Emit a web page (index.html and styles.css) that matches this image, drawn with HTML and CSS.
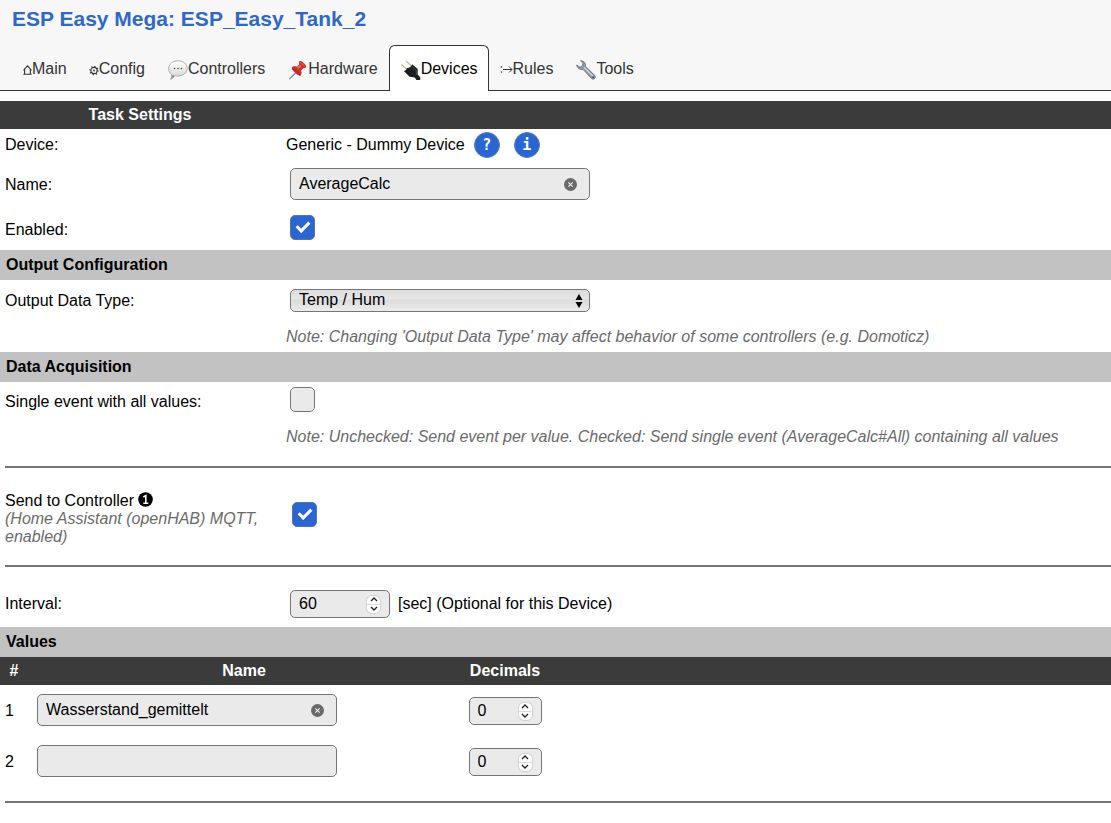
FILE: index.html
```html
<!DOCTYPE html>
<html lang="en">
<head>
<meta charset="utf-8">
<meta name="viewport" content="width=device-width, initial-scale=1">
<title>ESP_Easy_Tank_2</title>
<link rel="stylesheet" href="styles.css">
</head>
<body>
<header class="header">
  <h1 class="title">ESP Easy Mega: ESP_Easy_Tank_2</h1>
  <nav class="tabs">
    <a class="tab" href="#main"><svg viewBox="0 0 9 16" width="9" height="16"><path d="M.5 9.300 4.500 4.800l4 4.500M1.600 8.500v4.800M7.400 8.500v4.800M.3 13.300h8.400" fill="none" stroke="#333" stroke-width="1.100"/></svg>Main</a>
    <a class="tab" href="#config"><svg viewBox="0 0 10 16" width="10" height="16"><g fill="none" stroke="#333"><circle cx="5" cy="9.500" r="3.100" stroke-width="1.100"/><circle cx="5" cy="9.500" r="4.100" stroke-width="1.200" stroke-dasharray="1.200 2"/></g><circle cx="5" cy="9.500" r=".9" fill="#333"/></svg>Config</a>
    <a class="tab" href="#controllers"><svg class="icon" viewBox="0 0 20 20" width="20" height="20"><defs><linearGradient id="bubble" x2="0" y2="1"><stop stop-color="#fff"/><stop offset="1" stop-color="#d2d2d2"/></linearGradient></defs><path d="M10 .8c5.300 0 9.200 3.300 9.200 7.600s-4 7.600-9.200 7.600c-1.200 0-2.200-.1-3.200-.4-.8 1.600-2 2.900-4.200 3.600.9-1.300 1.200-2.800.9-4.500C1.700 13.200.7 11 .7 8.400.7 4.100 4.700.8 10 .8Z" fill="url(#bubble)" stroke="#a5a5a5" stroke-width=".9"/><path d="M3.600 14.800c.3 1.700 0 3.100-1 4.400 2.200-.7 3.400-2 4.200-3.600Z" fill="#999"/><g fill="#444"><circle cx="6.500" cy="8.500" r=".8"/><circle cx="10" cy="8.500" r=".8"/><circle cx="13.500" cy="8.500" r=".8"/></g></svg>Controllers</a>
    <a class="tab" href="#hardware"><svg class="icon" viewBox="0 0 20 20" width="20" height="20"><path d="m9 11.500-7.300 7.300" stroke="#7e93a8" stroke-width="1.300" stroke-linecap="round"/><path d="M11.700.9c1.800-.6 7 4.200 6.600 6.200-.2 1-1.700 1-2.700.8L13.100 10.500c1 2.200.4 4.600-.9 5.200C10.200 16 3.800 10.300 3.800 7.900c.1-1.500 2.800-1.900 4.800-1.200L11.300 4.200c-.4-1.300-.3-2.800.4-3.300Z" fill="#cf3027"/><path d="M12 1.500c1.700.1 5.300 3.700 5.600 5.600-1.800.3-5.800-3.600-5.600-5.600Z" fill="#dc4a3d"/><path d="m8.900 7 3.200-2.100 1.300 1.400-3.200 3Z" fill="#ec7062"/><path d="M4.400 8.800c2.500.6 6 3.800 7.600 6.500" fill="none" stroke="#9e2520" stroke-width="1"/></svg>Hardware</a>
    <a class="tab tab-active" href="#devices" aria-current="page"><svg class="icon" viewBox="0 0 20 20" width="20" height="20"><path d="m.5 4.500 6 5.300M5 .8l6 5.600" stroke="#bdb48b" stroke-width="1.100"/><path d="m11.200 4.200 5.500 4.900v5.400l2.500 2.700v2.700h-3.800L13.800 17.500l-5.300-.7-5.700-5.800c2.300-.5 2.800-1.600 3.200-2.900 2.900-.1 4.300-1.500 5.200-3.900Z" fill="#1c1e1e"/><path d="m11 6.500 4.200 4 .3 4.300" fill="none" stroke="#484d4a" stroke-width="1"/></svg>Devices</a>
    <a class="tab" href="#rules"><svg viewBox="0 0 13 16" width="13" height="16"><g fill="#333"><circle cx="1.500" cy="6" r=".8"/><circle cx="1.500" cy="11" r=".8"/></g><path d="M3 8.500h9M9 5.500l3 3-3 3" fill="none" stroke="#333" stroke-width="1"/></svg>Rules</a>
    <a class="tab" href="#tools"><svg class="icon" viewBox="0 0 20 20" width="20" height="20"><path d="M4.500.7c2.600-.2 4.700 1.500 5 4l.1 1.700 9.300 9.200c1.500 1.700-1.100 4.700-3.100 3.200L7.100 9.500c-3.300.5-6.100-1.500-6.400-4.600L4 7.300l2.700-1.900.2-2.300Z" fill="#929ba1" stroke="#657078" stroke-width=".8"/><path d="m8.300 7.500 8.500 8.700" stroke="#d8dde0" stroke-width="1.100"/><circle cx="17.200" cy="17.300" r=".9" fill="#38454d"/></svg>Tools</a>
  </nav>
</header>

<form class="form">
  <h2 class="bar bar-dark"><span class="bar-title">Task Settings</span></h2>
  <div class="row row-device">
    <span>Device:</span>
    <div class="value">Generic - Dummy Device
      <button type="button" class="round" aria-label="Help">?</button>
      <button type="button" class="round" aria-label="Information">i</button>
    </div>
  </div>
  <div class="row row-name">
    <label for="name">Name:</label>
    <div class="value control"><span class="field"><input class="input text" id="name" type="text" value="AverageCalc"><button type="button" class="clear" aria-label="Clear name"><svg viewBox="0 0 13 13" width="13" height="13"><circle cx="6.500" cy="6.500" r="6.500" fill="#696969"/><path d="m4.300 4.300 4.400 4.400m0-4.400L4.300 8.700" stroke="#eee" stroke-width="1.100"/></svg></button></span></div>
  </div>
  <div class="row row-enabled">
    <label for="enabled">Enabled:</label>
    <div class="value control"><input class="check" id="enabled" type="checkbox" checked></div>
  </div>

  <h2 class="bar">Output Configuration</h2>
  <div class="row row-type">
    <label for="type">Output Data Type:</label>
    <div class="value control"><span class="field"><select class="input select" id="type"><option>Temp / Hum</option></select><svg class="arrows" viewBox="0 0 8 14" width="8" height="14"><path d="m4 0 3.500 6h-7ZM.5 8h7L4 14Z"/></svg></span></div>
  </div>
  <div class="row row-note"><p class="value note">Note: Changing 'Output Data Type' may affect behavior of some controllers (e.g. Domoticz)</p></div>

  <h2 class="bar">Data Acquisition</h2>
  <div class="row row-single">
    <label for="single">Single event with all values:</label>
    <div class="value control"><input class="check" id="single" type="checkbox"></div>
  </div>
  <div class="row row-note"><p class="value note">Note: Unchecked: Send event per value. Checked: Send single event (AverageCalc#All) containing all values</p></div>

  <hr class="line">
  <div class="row row-send">
    <label for="send">Send to Controller <svg class="badge" viewBox="0 0 15 15" width="15" height="15"><circle cx="7.500" cy="7.500" r="7.300"/><path d="M5.300 5 7.800 3.600V11M5.300 11.300h5" fill="none" stroke="#fff" stroke-width="1.600"/></svg><br><span class="note">(Home Assistant (openHAB) MQTT, enabled)</span></label>
    <div class="value control control-send"><input class="check" id="send" type="checkbox" checked></div>
  </div>
  <hr class="line">

  <div class="row row-interval">
    <label for="interval">Interval:</label>
    <div class="value control"><span class="field"><input class="input number wide" id="interval" type="number" value="60"><span class="stepper"><button type="button" aria-label="Increase interval"><svg viewBox="0 0 8 5" width="8" height="5"><path d="m1 4 3-3 3 3"/></svg></button><button type="button" aria-label="Decrease interval"><svg viewBox="0 0 8 5" width="8" height="5"><path d="m1 1 3 3 3-3"/></svg></button></span></span><span class="unit">[sec] (Optional for this Device)</span></div>
  </div>

  <h2 class="bar">Values</h2>
  <table class="values">
    <thead>
      <tr><th class="col-index">#</th><th class="col-name">Name</th><th class="col-decimals">Decimals</th><th></th></tr>
    </thead>
    <tbody>
      <tr>
        <td>1</td>
        <td class="cell-name"><span class="field"><input class="input text" type="text" aria-label="Value 1 name" value="Wasserstand_gemittelt"><button type="button" class="clear" aria-label="Clear value 1 name"><svg viewBox="0 0 13 13" width="13" height="13"><circle cx="6.500" cy="6.500" r="6.500" fill="#696969"/><path d="m4.300 4.300 4.400 4.400m0-4.400L4.300 8.700" stroke="#eee" stroke-width="1.100"/></svg></button></span></td>
        <td class="cell-decimals"><span class="field"><input class="input number" type="number" aria-label="Value 1 decimals" value="0"><span class="stepper"><button type="button" aria-label="Increase decimals 1"><svg viewBox="0 0 8 5" width="8" height="5"><path d="m1 4 3-3 3 3"/></svg></button><button type="button" aria-label="Decrease decimals 1"><svg viewBox="0 0 8 5" width="8" height="5"><path d="m1 1 3 3 3-3"/></svg></button></span></span></td>
        <td></td>
      </tr>
      <tr>
        <td>2</td>
        <td class="cell-name"><span class="field"><input class="input text" type="text" aria-label="Value 2 name"></span></td>
        <td class="cell-decimals"><span class="field"><input class="input number" type="number" aria-label="Value 2 decimals" value="0"><span class="stepper"><button type="button" aria-label="Increase decimals 2"><svg viewBox="0 0 8 5" width="8" height="5"><path d="m1 4 3-3 3 3"/></svg></button><button type="button" aria-label="Decrease decimals 2"><svg viewBox="0 0 8 5" width="8" height="5"><path d="m1 1 3 3 3-3"/></svg></button></span></span></td>
        <td></td>
      </tr>
    </tbody>
  </table>
  <hr class="line">
</form>
</body>
</html>
```
FILE: styles.css
```css
*, ::before, ::after { box-sizing: border-box; }

body {
  margin: 0;
  background: #fff;
  color: #000;
  font: 16px/18px "Liberation Sans", Arial, sans-serif;
}

/* Header and tabs */
.header {
  padding: 6px 12px 0;
  background: #f7f7f7;
  box-shadow: inset 0 -1px #333;
}
.title {
  margin: 0 0 13px;
  color: #2f68c5;
  font-size: 21px;
  line-height: 26px;
}
.tabs { display: flex; }
.tab {
  display: flex;
  align-items: center;
  height: 46px;
  padding: 0 10px;
  border: 1px solid transparent;
  border-bottom: 0;
  border-radius: 6px 6px 0 0;
  color: #333;
  text-decoration: none;
}
.icon { margin: 2px 0 0 1px; }
.tab-active {
  border-color: #333;
  background: #fff;
  color: #000;
}

/* Section bars */
.form { padding-top: 10px; }
.bar {
  margin: 0;
  padding: 0 6px;
  background: #c2c2c2;
  font-size: 16px;
  line-height: 30px;
}
.bar-dark {
  padding: 0;
  background: #3b3b3b;
  color: #fff;
  line-height: 28px;
}
.bar-title {
  display: block;
  width: 280px;
  text-align: center;
}

/* Rows: label column, then the setting */
.row {
  display: grid;
  grid-template-columns: 260px 1fr;
  column-gap: 21px;
  align-items: center;
  padding-left: 5px;
}
.value {
  display: flex;
  align-items: center;
  grid-column: 2;
  margin: 0;
}
.control { padding-left: 4px; }
.control-send { padding-left: 6px; }
.row-device { height: 31px; }
.row-name { height: 48px; }
.row-name label { padding-top: 2px; }
.row-enabled { height: 42px; padding-top: 1px; }
.row-enabled .check, .row-single .check { margin-bottom: 4px; }
.row-type { height: 41px; }
.row-note { height: 31px; }
.row-single { height: 39px; }
.row-send { height: 97px; padding-top: 4px; }
.row-send .check { margin-bottom: 8px; }
.row-interval { height: 60px; padding-top: 13px; }
.note { color: #6a6a6a; font-style: italic; }
.badge { vertical-align: -1px; }
.unit { margin-left: 8px; }

.line {
  height: 2px;
  margin: 14px 0 0 5px;
  border: 0;
  background: #757575;
}
.row-send + .line { margin-top: 0; }

/* Controls */
.round {
  width: 26px;
  height: 26px;
  margin-left: 9px;
  padding: 0;
  border: 1px solid #5e7fb8;
  border-radius: 50%;
  background: #2965d3;
  color: #fff;
  font: bold 15px/24px "DejaVu Sans Mono", monospace;
}
.round + .round { margin-left: 14px; }

.field {
  position: relative;
  display: inline-flex;
}
.input {
  margin: 0;
  padding: 0 8px;
  border: 1px solid #757575;
  border-radius: 5px;
  background: #eaeaea;
  color: #000;
  font: inherit;
}
.text {
  width: 300px;
  height: 32px;
}
.clear {
  position: absolute;
  top: 10px;
  right: 13px;
  display: flex;
  padding: 0;
  border: 0;
  background: none;
}
.select {
  appearance: none;
  width: 300px;
  height: 23px;
  padding-bottom: 2px;
  background: linear-gradient(#dcdcdc, #e6e6e6 40%, #dcdcdc 50%, #ececec);
}
.arrows {
  position: absolute;
  top: 5px;
  right: 7px;
  pointer-events: none;
}
.number {
  appearance: textfield;
  width: 73px;
  height: 28px;
}
.wide { width: 100px; }
.stepper {
  position: absolute;
  top: 6px;
  right: 10px;
  display: grid;
  gap: 1px;
  width: 13px;
  height: 17px;
  border-radius: 5px;
  background: #ddd;
  box-shadow: 0 0 1px 1px #d2d2d2;
  overflow: hidden;
}
.stepper button {
  display: grid;
  place-items: center;
  padding: 0;
  border: 0;
  background: #fff;
}
.stepper path {
  fill: none;
  stroke: #222;
  stroke-width: 1.4;
}
.check {
  appearance: none;
  display: grid;
  place-items: center;
  width: 25px;
  height: 25px;
  margin: 0;
  border: 1px solid #757575;
  border-radius: 5px;
  background: #eaeaea;
}
.check:checked { background: #2965d3; border-color: #5674aa; }
.check:checked::after {
  content: "";
  width: 8px;
  height: 13px;
  margin-bottom: 4px;
  border: solid #fff;
  border-width: 0 3px 3px 0;
  transform: rotate(45deg);
}

/* Values table */
.values {
  width: 100%;
  border-collapse: collapse;
  table-layout: fixed;
}
.values th {
  height: 28px;
  padding: 0;
  background: #3b3b3b;
  color: #fff;
}
.values td {
  height: 51px;
  padding: 0 0 0 5px;
}
.values .field { vertical-align: middle; }
.values .cell-name { padding-bottom: 2px; }
.values .cell-decimals { padding: 0; text-align: center; }
.values .col-index { width: 32px; padding-right: 4px; }
.col-name { width: 424px; }
.col-decimals { width: 98px; }
```
